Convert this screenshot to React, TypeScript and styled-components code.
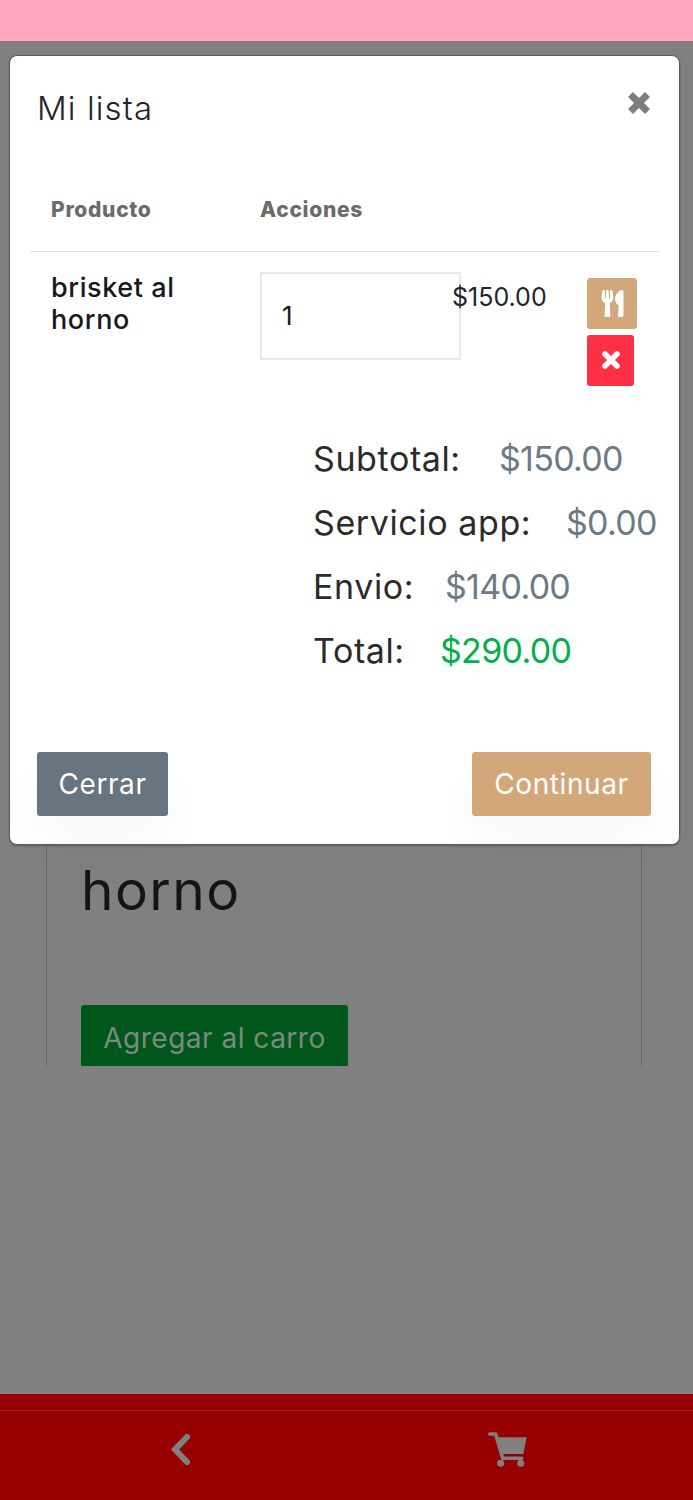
import React from 'react';
import styled, { createGlobalStyle } from 'styled-components';
import { FaUtensils } from 'react-icons/fa';

const GlobalStyle = createGlobalStyle`
  html, body {
    margin: 0;
    padding: 0;
    background: #808080;
    font-family: Inter, 'Noto Sans', sans-serif;
  }
  * { box-sizing: border-box; }
`;

const Page = styled.div`
  position: relative;
  width: 693px;
  height: 1500px;
  display: flex;
  flex-direction: column;
  overflow: hidden;
`;

const Header = styled.header`
  height: 41px;
  background: #ffa6bf;
  flex: none;
`;

const Main = styled.main`
  flex: 1;
  padding: 660px 51px 0 46px;
  background: #808080;
`;

const ProductCard = styled.article`
  height: 365px;
  overflow: hidden;
  border-left: 1px solid #6a6a6a;
  border-right: 1px solid #6a6a6a;
  padding: 158px 34px 0;
`;

const CardTitle = styled.h2`
  margin: 0 0 84px;
  font-size: 55px;
  line-height: 62px;
  font-weight: 400;
  letter-spacing: 1.4px;
  color: #141414;
`;

const AddButton = styled.button`
  display: block;
  width: 267px;
  height: 75px;
  padding: 0 0 10px;
  border: 0;
  border-radius: 3px;
  background: #00571c;
  color: #7b8a7e;
  font: inherit;
  font-size: 28px;
  letter-spacing: 0.5px;
`;

const BottomNav = styled.nav`
  flex: none;
  height: 106px;
  background: #960000;
  padding-top: 16px;
`;

const NavRow = styled.div`
  height: 90px;
  border-top: 1px solid #a31c1c;
  display: flex;
  align-items: center;
  justify-content: space-between;
  padding: 0 165px 12px 170px;
  color: #808080;
`;

const Dialog = styled.section`
  position: absolute;
  top: 55px;
  left: 9px;
  width: 671px;
  height: 790px;
  display: flex;
  flex-direction: column;
  background: #fff;
  border: 1px solid #5a5a5a;
  border-radius: 8px;
  box-shadow: 0 1px 2px rgba(0, 0, 0, 0.3);
`;

const DialogHead = styled.div`
  display: flex;
  justify-content: space-between;
  align-items: flex-start;
  padding: 29px 29px 0 27px;
`;

const DialogTitle = styled.h5`
  margin: 0;
  font-size: 33px;
  line-height: 46px;
  font-weight: 300;
  letter-spacing: 1.1px;
  color: #212529;
`;

const CloseIcon = styled.span`
  display: flex;
  margin-top: 7px;
  color: #7d7d7d;
`;

const ItemsTable = styled.table`
  width: 629px;
  margin: 29px 0 0 20px;
  border-collapse: collapse;
  table-layout: fixed;
`;

const HeadCell = styled.th`
  height: 91px;
  padding: 8px 0 0 21px;
  text-align: left;
  font-size: 21px;
  font-weight: 800;
  letter-spacing: 0.7px;
  color: #6b6b6b;
  border-bottom: 1px solid #dee2e6;
  vertical-align: middle;
`;

const Cell = styled.td`
  padding: 20px 0 0 21px;
  vertical-align: top;
`;

const ProductName = styled.div`
  font-size: 27px;
  line-height: 32px;
  font-weight: 500;
  letter-spacing: 0.6px;
  color: #16191d;
`;

const QtyInput = styled.input`
  display: block;
  width: 201px;
  height: 88px;
  padding: 0 20px;
  border: 2px solid #e8e8e8;
  background: transparent;
  font: inherit;
  font-size: 26px;
  color: #16191d;
  outline: none;
`;

const Price = styled.div`
  padding-top: 10px;
  font-size: 25px;
  line-height: 30px;
  color: #212529;
  white-space: nowrap;
`;

const ActionStack = styled.div`
  display: flex;
  flex-direction: column;
  align-items: flex-start;
  gap: 6px;
  padding-top: 6px;
`;

const ActionButton = styled.button<{ $bg: string; $width: number }>`
  display: flex;
  align-items: center;
  justify-content: center;
  width: ${(p) => p.$width}px;
  height: 51px;
  padding: 0;
  border: 0;
  border-radius: 3px;
  background: ${(p) => p.$bg};
  color: #fff;
`;

const Totals = styled.div`
  margin: 41px 0 0 303px;
  display: flex;
  flex-direction: column;
`;

const TotalRow = styled.div`
  display: flex;
  gap: 37px;
  height: 64px;
  align-items: center;
  font-size: 34px;
  color: #2b2b2b;
  white-space: nowrap;
`;

const TotalLabel = styled.span<{ $width: number }>`
  width: ${(p) => p.$width}px;
  letter-spacing: 0.6px;
`;

const TotalValue = styled.span<{ $color?: string }>`
  letter-spacing: -0.7px;
  color: ${(p) => p.$color || '#6c7a85'};
`;

const DialogFoot = styled.div`
  margin-top: auto;
  display: flex;
  justify-content: space-between;
  padding: 0 28px 28px 27px;
`;

const FootButton = styled.button<{ $bg: string; $width: number }>`
  width: ${(p) => p.$width}px;
  height: 64px;
  border: 0;
  border-radius: 3px;
  background: ${(p) => p.$bg};
  color: #fff;
  font: inherit;
  font-size: 28px;
  letter-spacing: 0.6px;
  box-shadow: 0 30px 50px rgba(0, 0, 0, 0.03);
`;

const totals = [
  { label: 'Subtotal:', value: '$150.00', width: 149 },
  { label: 'Servicio app:', value: '$0.00', width: 216 },
  { label: 'Envio:', value: '$140.00', width: 95 },
  { label: 'Total:', value: '$290.00', width: 90, color: '#00b04a' },
];

function BlockCross() {
  return (
    <svg width="22" height="22" viewBox="0 0 22 22" fill="none" stroke="currentColor" strokeWidth="7">
      <path d="M2.5 2.5 19.5 19.5M19.5 2.5 2.5 19.5" />
    </svg>
  );
}

function RoundCross() {
  return (
    <svg width="18" height="18" viewBox="0 0 18 18" fill="none" stroke="currentColor" strokeWidth="5.5" strokeLinecap="round">
      <path d="M3 3 15 15M15 3 3 15" />
    </svg>
  );
}

function BackChevron() {
  return (
    <svg width="24" height="36" viewBox="0 0 24 36" fill="none" stroke="currentColor" strokeWidth="6" strokeLinecap="round" strokeLinejoin="miter">
      <path d="M17 5 5 17.5 17 30" />
    </svg>
  );
}

function CartIcon() {
  return (
    <svg width="40" height="36" viewBox="0 0 40 36" fill="currentColor">
      <path d="M1.8 2H7.6L14.7 26.3H33.7" fill="none" stroke="currentColor" strokeWidth="3.6" strokeLinecap="round" strokeLinejoin="round" />
      <path d="M9.3 5.3H38.7L35.3 22H12.7Z" />
      <circle cx="12.7" cy="31.3" r="3.5" />
      <circle cx="32.7" cy="31.3" r="3.5" />
    </svg>
  );
}

export default function App() {
  return (
    <Page>
      <GlobalStyle />
      <Header />
      <Main>
        <ProductCard>
          <CardTitle>horno</CardTitle>
          <AddButton>Agregar al carro</AddButton>
        </ProductCard>
      </Main>
      <BottomNav>
        <NavRow>
          <BackChevron />
          <CartIcon />
        </NavRow>
      </BottomNav>

      <Dialog>
        <DialogHead>
          <DialogTitle>Mi lista</DialogTitle>
          <CloseIcon>
            <BlockCross />
          </CloseIcon>
        </DialogHead>

        <ItemsTable>
          <colgroup>
            <col style={{ width: 209 }} />
            <col style={{ width: 192 }} />
            <col style={{ width: 135 }} />
            <col style={{ width: 93 }} />
          </colgroup>
          <thead>
            <tr>
              <HeadCell>Producto</HeadCell>
              <HeadCell>Acciones</HeadCell>
              <HeadCell />
              <HeadCell />
            </tr>
          </thead>
          <tbody>
            <tr>
              <Cell>
                <ProductName>brisket al horno</ProductName>
              </Cell>
              <Cell>
                <QtyInput defaultValue="1" />
              </Cell>
              <Cell>
                <Price>$150.00</Price>
              </Cell>
              <Cell>
                <ActionStack>
                  <ActionButton $bg="#d2a87a" $width={50}>
                    <FaUtensils size={27} />
                  </ActionButton>
                  <ActionButton $bg="#ff3045" $width={47}>
                    <RoundCross />
                  </ActionButton>
                </ActionStack>
              </Cell>
            </tr>
          </tbody>
        </ItemsTable>

        <Totals>
          {totals.map((row) => (
            <TotalRow key={row.label}>
              <TotalLabel $width={row.width}>{row.label}</TotalLabel>
              <TotalValue $color={row.color}>{row.value}</TotalValue>
            </TotalRow>
          ))}
        </Totals>

        <DialogFoot>
          <FootButton $bg="#66757f" $width={131}>Cerrar</FootButton>
          <FootButton $bg="#d2a87a" $width={179}>Continuar</FootButton>
        </DialogFoot>
      </Dialog>
    </Page>
  );
}
